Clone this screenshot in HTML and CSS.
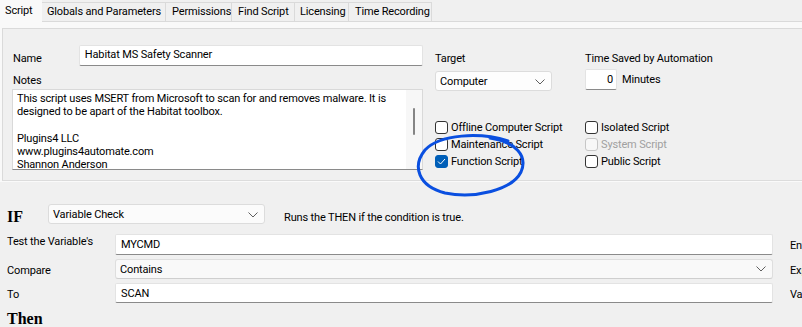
FILE: index.html
```html
<!DOCTYPE html>
<html lang="en">
<head>
  <meta charset="UTF-8">
  <title>Script Editor</title>
  <link rel="stylesheet" href="styles.css">
</head>
<body>

  <div class="tabs">
    <div class="tab active tab-script">Script</div>
    <div class="tab tab-globals">Globals and Parameters</div>
    <div class="tab tab-perm">Permissions</div>
    <div class="tab tab-find">Find Script</div>
    <div class="tab tab-lic">Licensing</div>
    <div class="tab tab-time">Time Recording</div>
  </div>

  <div class="page">
    <div class="panel-top">
      <div class="left-block">
        <div class="name-row">
          <label class="name-label">Name</label>
          <div class="textbox name-box">Habitat MS Safety Scanner</div>
        </div>
        <div class="notes-label">Notes</div>
        <div class="notes">
          <div class="notes-text">This script uses MSERT from Microsoft to scan for and removes malware. It is<br>designed to be apart of the Habitat toolbox.<br><br>Plugins4 LLC<br>www.plugins4automate.com<br>Shannon Anderson</div>
          <div class="scrollbar"><div class="thumb"></div></div>
        </div>
      </div>

      <div class="right-block">
        <div class="field-cols">
          <div class="target-col">
            <div class="field-label">Target</div>
            <div class="combo target-combo">
              <span>Computer</span>
              <svg class="chev" width="10" height="6" viewBox="0 0 10 6"><path d="M0.5 0.5 L5 5 L9.5 0.5" fill="none" stroke="#5f5f5f" stroke-width="1"/></svg>
            </div>
          </div>
          <div class="time-col">
            <div class="field-label">Time Saved by Automation</div>
            <div class="time-row">
              <div class="textbox time-box">0</div>
              <span>Minutes</span>
            </div>
          </div>
        </div>

        <div class="checks">
          <div class="check"><span class="box"></span>Offline Computer Script</div>
          <div class="check"><span class="box"></span>Isolated Script</div>
          <div class="check"><span class="box"></span>Maintenance Script</div>
          <div class="check disabled"><span class="box"></span>System Script</div>
          <div class="check"><span class="box checked"><svg width="9" height="7" viewBox="0 0 9 7"><path d="M1 3.5 L3.5 6 L8 1" fill="none" stroke="#fff" stroke-width="1"/></svg></span>Function Script</div>
          <div class="check"><span class="box"></span>Public Script</div>
        </div>
      </div>
    </div>

    <div class="panel-bottom">
      <div class="if-row">
        <span class="big">IF</span>
        <div class="combo if-combo">
          <span>Variable Check</span>
          <svg class="chev" width="10" height="6" viewBox="0 0 10 6"><path d="M0.5 0.5 L5 5 L9.5 0.5" fill="none" stroke="#5f5f5f" stroke-width="1"/></svg>
        </div>
        <span class="hint">Runs the THEN if the condition is true.</span>
      </div>

      <div class="cond-grid">
        <div class="cond-label first">Test the Variable's</div>
        <div class="textbox cond-box">MYCMD</div>
        <div class="side-label">Enter</div>

        <div class="cond-label">Compare</div>
        <div class="combo cond-box compare">
          <span>Contains</span>
          <svg class="chev" width="10" height="6" viewBox="0 0 10 6"><path d="M0.5 0.5 L5 5 L9.5 0.5" fill="none" stroke="#5f5f5f" stroke-width="1"/></svg>
        </div>
        <div class="side-label">Expression</div>

        <div class="cond-label">To</div>
        <div class="textbox cond-box">SCAN</div>
        <div class="side-label">Value</div>
      </div>

      <div class="big then">Then</div>
    </div>
  </div>

  <!-- hand drawn highlight -->
  <svg class="scribble" width="802" height="327" viewBox="0 0 802 327">
    <path d="M508 141 C480 132, 440 134, 425 150 C412 166, 418 186, 445 193 C475 199, 512 190, 521 172 C528 156, 516 142, 490 138" fill="none" stroke="#0a4fe0" stroke-width="3" stroke-linecap="round"/>
  </svg>

</body>
</html>
```

FILE: styles.css
```css
html, body {
  margin: 0;
  overflow: hidden;
}

body {
  position: relative;
  width: 802px;
  height: 327px;
  background: #f0f0f0;
  font-family: Roboto, "Liberation Sans", sans-serif;
  font-size: 11px;
  letter-spacing: -0.15px;
  color: #000;
}

.tabs {
  display: flex;
  align-items: flex-end;
  height: 21px;
}

.tab {
  box-sizing: border-box;
  height: 19px;
  line-height: 17px;
  padding-left: 5px;
  border: 1px solid #dadada;
  border-bottom: none;
  border-left: none;
  background: #f0f0f0;
  white-space: nowrap;
  overflow: hidden;
}

.tab.active {
  height: 22px;
  margin-bottom: -1px;
  background: #f9f9f9;
  border: none;
  position: relative;
  line-height: 21px;
}

.tab-script { width: 42px; }
.tab-globals { width: 124px; }
.tab-perm { width: 66px; padding-left: 6px; }
.tab-find { width: 63px; padding-left: 6px; }
.tab-lic { width: 54px; }
.tab-time { width: 83px; padding-left: 6px; }

.page {
  border-top: 1px solid #dadada;
  background: #f9f9f9;
  padding: 6px 0 0 2px;
}

.panel-top {
  display: flex;
  height: 151px;
  border-top: 1px solid #dadada;
  border-left: 1px solid #dadada;
  border-bottom: 1px solid #dcdcdc;
  background: #f0f0f0;
}

.left-block {
  width: 411px;
  margin-left: 9px;
  padding-top: 16px;
}

.name-row {
  display: flex;
  height: 21px;
}

.name-label {
  width: 66px;
  padding-left: 1px;
  padding-top: 7px;
  line-height: 14px;
}

.textbox {
  box-sizing: border-box;
  background: #fff;
  border: 1px solid #e3e3e3;
  border-bottom-color: #8a8a8a;
  border-radius: 2px;
  padding: 0 5px;
  white-space: nowrap;
}

.name-box {
  width: 345px;
  height: 21px;
  line-height: 18px;
}

.notes-label {
  margin-top: 7px;
  padding-top: 2px;
  line-height: 12px;
  padding-left: 1px;
}

.notes {
  display: flex;
  box-sizing: border-box;
  height: 81px;
  margin-top: 2px;
  background: #fff;
  border: 1px solid #d9d9d9;
  border-bottom-color: #8a8a8a;
}

.notes-text {
  flex: 1;
  padding: 2px 0 0 4px;
  line-height: 13.2px;
  white-space: nowrap;
}

.scrollbar {
  width: 16px;
  background: #f7f7f7;
  display: flex;
  justify-content: center;
  padding-top: 18px;
}

.thumb {
  width: 2px;
  height: 27px;
  background: #858585;
  border-radius: 1px;
}

.right-block {
  margin-left: 12px;
}

.field-cols {
  display: flex;
  padding-top: 23px;
}

.field-label {
  line-height: 14px;
}

.target-col {
  width: 150px;
}

.combo {
  box-sizing: border-box;
  display: flex;
  align-items: center;
  justify-content: space-between;
  background: #fdfdfd;
  border: 1px solid #dcdcdc;
  border-radius: 3px;
  padding: 0 6px 0 4px;
  white-space: nowrap;
}

.target-combo {
  width: 117px;
  height: 20px;
  margin-top: 5px;
  padding-top: 1px;
}

.time-row {
  display: flex;
  align-items: center;
  margin-top: 3px;
}

.time-box {
  width: 32px;
  height: 21px;
  line-height: 19px;
  text-align: right;
  padding-right: 3px;
  margin-right: 5px;
}

.checks {
  display: grid;
  grid-template-columns: 150px 150px;
  grid-auto-rows: 17px;
  margin-top: 28px;
}

.check {
  display: flex;
  align-items: center;
  white-space: nowrap;
}

.box {
  box-sizing: border-box;
  width: 13px;
  height: 13px;
  border: 1px solid #333;
  border-radius: 3px;
  background: #fff;
  margin-right: 3px;
  display: flex;
  align-items: center;
  justify-content: center;
}

.box.checked {
  background: #005fb8;
  border-color: #005fb8;
}

.check.disabled {
  color: #a0a0a0;
}

.check.disabled .box {
  border-color: #c6c6c6;
  background: #f7f7f7;
}

.panel-bottom {
  margin-left: -2px;
  background: #f0f0f0;
  border-top: 1px solid #fafafa;
  padding: 22px 0 0 7px;
  height: 122px;
}

.big {
  font-family: "Liberation Serif", serif;
  font-weight: bold;
  font-size: 16px;
  letter-spacing: 0;
}

.if-row {
  display: flex;
  align-items: center;
  height: 20px;
}

.if-row .big {
  width: 41px;
  padding-top: 6px;
}

.if-combo {
  width: 217px;
  height: 20px;
  padding-top: 1px;
  background: #fbfbfb;
}

.hint {
  margin-left: 19px;
  padding-top: 6px;
}

.cond-grid {
  display: grid;
  grid-template-columns: 108px 658px 100px;
  grid-template-rows: 21px 20px 20px;
  row-gap: 4px;
  margin-top: 10px;
  align-items: center;
}

.cond-label {
  padding-top: 2px;
}

.cond-label.first {
  padding-top: 0;
  padding-bottom: 6px;
}

.cond-box {
  height: 100%;
  line-height: 19px;
}

.compare {
  background: #f9f9f9;
  border-color: #dedede;
  border-bottom-color: #cfcfcf;
}

.side-label {
  padding-left: 17px;
  padding-top: 2px;
  white-space: nowrap;
}

.then {
  margin-top: 6px;
  line-height: 20px;
}

.scribble {
  position: absolute;
  left: 0;
  top: 0;
  pointer-events: none;
}
```
